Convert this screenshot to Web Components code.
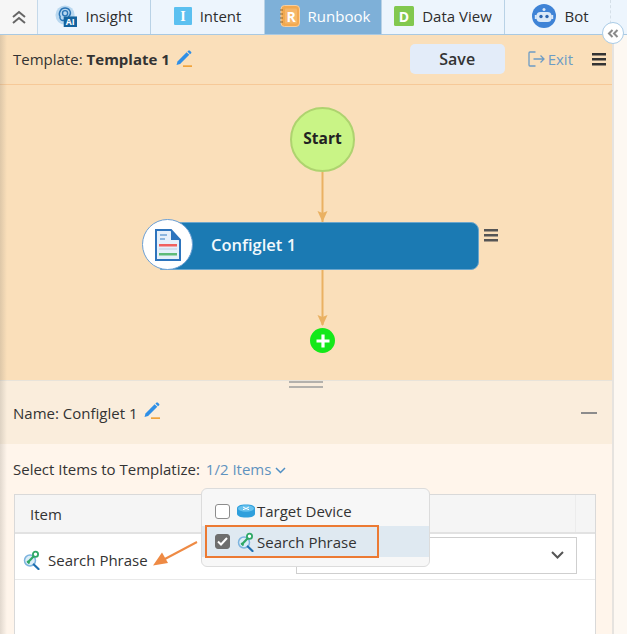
<!DOCTYPE html>
<html>
<head>
<meta charset="utf-8">
<title>Runbook Template</title>
<style>
  html, body { margin: 0; background: #fff; font-family: "Open Sans", "Noto Sans", sans-serif; color: #333; }
</style>
</head>
<body>
<app-shell>
  <tab-bar slot="tabs">
    <nav-tab icon="insight" width="113">Insight</nav-tab>
    <nav-tab icon="intent" width="114">Intent</nav-tab>
    <nav-tab icon="runbook" width="117" nudge="3" active>Runbook</nav-tab>
    <nav-tab icon="data" width="123">Data View</nav-tab>
    <nav-tab icon="bot" width="106" nudge="6" last>Bot</nav-tab>
  </tab-bar>
  <template-header slot="main" name="Template 1"></template-header>
  <flow-canvas slot="main"></flow-canvas>
  <name-bar slot="main" name="Configlet 1"></name-bar>
  <items-section slot="main"></items-section>
</app-shell>

<script>
const pencil = `<svg width="18" height="18" viewBox="0 0 18 18"><path d="M2.500 11.500 11.600 2.200l2.700 2.600-9.200 9.300-3.600 1z" fill="#2f8fe6"/><path d="M12.400 1.500 13.600.6c.4-.3.8-.3 1.100 0l1.500 1.500c.3.3.3.8 0 1.100L15 4.300z" fill="#2f8fe6"/><rect x="8" y="15.300" width="9" height="1.700" fill="#f0a33c"/></svg>`;

const keySearch = `<svg width="18" height="20" viewBox="0 0 18 20"><circle cx="7" cy="10.500" r="5.500" fill="#dcedf8" stroke="#7db4de" stroke-width="1.500"/><path d="m10.800 14.500 4.700 4.500" stroke="#1f6fb0" stroke-width="2.200" stroke-linecap="round"/><path d="M4.500 12.800 11 6" stroke="#2fa866" stroke-width="2.200"/><path d="m6.500 13.500-2.300-2.300" stroke="#2fa866" stroke-width="1.800"/><circle cx="12.500" cy="4.300" r="2.600" fill="#fff" stroke="#2fa866" stroke-width="1.800"/></svg>`;

const tabIcons = {
  insight: `<svg width="22" height="22" viewBox="0 0 24 24"><circle cx="11" cy="11" r="10.500" fill="#b9d8f0"/><path d="M6 6c2-3.500 8-3.500 10 0 1.500 2.500.5 5-1 6.500.5 2-.5 4-2.500 4.500-1.500-1-2.500-1-4 0-2-.5-3.500-2.500-3-4.500C4.500 11 4.500 8.500 6 6z" fill="none" stroke="#2a74b5" stroke-width="1.600"/><circle cx="11" cy="9" r="2.800" fill="none" stroke="#2a74b5" stroke-width="1.500"/><rect x="9.500" y="12.500" width="14.500" height="11.500" fill="#14639f"/><text x="16.700" y="22" font-family="Open Sans" font-size="9.500" font-weight="700" fill="#fff" text-anchor="middle">AI</text></svg>`,
  intent: `<svg width="18" height="18" viewBox="0 0 18 18"><rect width="18" height="18" rx="1" fill="#5bc0f0"/><text x="9" y="14" font-family="Liberation Serif" font-size="14" font-weight="700" fill="#fff" text-anchor="middle">I</text></svg>`,
  runbook: `<svg width="21" height="22" viewBox="0 0 21 22"><rect x="2" y="0.500" width="18.500" height="21" rx="3.500" fill="#f3a94f" stroke="#f8cf9f"/><path d="M1 5h3M1 9h3M1 13h3M1 17h3" stroke="#8a6a3a" stroke-width="1.200"/><rect x="6" y="3.500" width="12" height="15" rx="1" fill="#f6b76a"/><text x="12" y="16.500" font-family="Open Sans" font-size="14" font-weight="700" fill="#fff" text-anchor="middle">R</text></svg>`,
  data: `<svg width="20" height="20" viewBox="0 0 20 20"><rect width="20" height="20" rx="1.500" fill="#82c84f"/><text x="10" y="15.500" font-family="Open Sans" font-size="14" font-weight="700" fill="#fff" text-anchor="middle">D</text></svg>`,
  bot: `<svg width="24" height="24" viewBox="0 0 24 24"><circle cx="12" cy="12" r="12" fill="#3f83d6"/><rect x="4.500" y="8" width="15" height="10" rx="4" fill="#dbe9f8"/><rect x="2.800" y="11" width="2" height="4" fill="#dbe9f8"/><rect x="19.200" y="11" width="2" height="4" fill="#dbe9f8"/><circle cx="12" cy="5.500" r="1.500" fill="#dbe9f8"/><circle cx="9" cy="12.500" r="1.700" fill="#2d66b0"/><circle cx="15" cy="12.500" r="1.700" fill="#2d66b0"/></svg>`
};

class AppShell extends HTMLElement {
  constructor() {
    super();
    this.attachShadow({ mode: 'open' });
  }

  connectedCallback() {
    this.shadowRoot.innerHTML = `
      <style>
        :host { display: block; position: relative; width: 627px; height: 634px; overflow: hidden; }
        .page { display: flex; height: 599px; }
        .main { width: 612px; display: flex; flex-direction: column; border-right: 2px solid #e6e3df; overflow: hidden; }
        .strip { flex: 1; background: #fdf8f2; }
        .shade { position: absolute; left: 0; top: 35px; bottom: 0; width: 7px; background: linear-gradient(90deg, rgba(120,115,105,.22), rgba(120,115,105,0)); pointer-events: none; }
      </style>
      <slot name="tabs"></slot>
      <div class="page">
        <div class="main"><slot name="main"></slot></div>
        <div class="strip"></div>
      </div>
      <div class="shade"></div>
    `;
  }
}

class TabBar extends HTMLElement {
  constructor() {
    super();
    this.attachShadow({ mode: 'open' });
  }

  connectedCallback() {
    this.shadowRoot.innerHTML = `
      <style>
        :host { display: flex; position: relative; height: 35px; box-sizing: border-box; background: #edf5fd; border-bottom: 1px solid #a9c9e2; }
        .up { width: 37px; display: flex; align-items: center; justify-content: center; background: #f6f6f6; border-right: 1px solid #c5d9ea; }
        .collapse { position: absolute; left: 602px; top: 22px; width: 20px; height: 20px; z-index: 3; border-radius: 50%; background: #fff; border: 1px solid #a9cbe6; display: flex; align-items: center; justify-content: center; }
      </style>
      <div class="up">
        <svg width="16" height="14" viewBox="0 0 16 14" fill="none" stroke="#666" stroke-width="2"><path d="m2 7 6-5 6 5M2 13l6-5 6 5"/></svg>
      </div>
      <slot></slot>
      <div class="collapse">
        <svg width="12" height="9" viewBox="0 0 12 9" fill="none" stroke="#8a8a8a" stroke-width="2"><path d="M5.500 1 2 4.500 5.500 8M10.500 1 7 4.500 10.500 8"/></svg>
      </div>
    `;
  }
}

class NavTab extends HTMLElement {
  constructor() {
    super();
    this.attachShadow({ mode: 'open' });
  }

  connectedCallback() {
    const active = this.hasAttribute('active');
    const last = this.hasAttribute('last');
    const nudge = this.getAttribute('nudge') || 0;
    this.shadowRoot.innerHTML = `
      <style>
        :host { display: flex; align-items: center; justify-content: center; gap: 8px; box-sizing: border-box; padding: 0 0 2px ${nudge}px;
          width: ${this.getAttribute('width')}px; font-size: 15px;
          color: ${active ? '#fff' : '#2d2d2d'}; background: ${active ? '#7eb0d8' : 'transparent'};
          border-right: ${last ? '1px dashed #d5dfe8' : '1px solid #b9d2e6'}; }
        .ico { display: flex; }
      </style>
      <span class="ico">${tabIcons[this.getAttribute('icon')]}</span>
      <slot></slot>
    `;
  }
}

class TemplateHeader extends HTMLElement {
  constructor() {
    super();
    this.attachShadow({ mode: 'open' });
  }

  connectedCallback() {
    this.shadowRoot.innerHTML = `
      <style>
        :host { display: flex; align-items: center; flex: none; height: 50px; box-sizing: border-box; padding: 0 6px 1px 13px;
          background: #fadfba; border-bottom: 1px solid #f6c998; font-size: 15px; color: #333; }
        b { margin-left: 4px; font-weight: 700; }
        .edit { display: flex; margin-left: 5px; }
        .save { margin-left: auto; width: 95px; height: 30px; border-radius: 5px; background: #e3ecf9; font-size: 16px; font-weight: 600; color: #333;
          display: flex; align-items: center; justify-content: center; }
        .exit { display: flex; align-items: center; gap: 3px; margin-left: 23px; color: #6d9cc5; font-size: 15px; }
        .menu { display: flex; margin-left: 19px; }
      </style>
      <span>Template:</span><b>${this.getAttribute('name')}</b>
      <span class="edit">${pencil}</span>
      <div class="save">Save</div>
      <div class="exit">
        <svg width="17" height="16" viewBox="0 0 17 16" fill="none" stroke="#6d9cc5" stroke-width="1.300"><path d="M7.500 1H2a1 1 0 0 0-1 1v12a1 1 0 0 0 1 1h5.500M5.500 8H16M12.500 4.500 16 8l-3.500 3.500"/></svg>
        <span>Exit</span>
      </div>
      <div class="menu">
        <svg width="14" height="13" viewBox="0 0 14 13" fill="#333"><rect width="14" height="2.500"/><rect y="5" width="14" height="2.500"/><rect y="10" width="14" height="2.500"/></svg>
      </div>
    `;
  }
}

class FlowCanvas extends HTMLElement {
  constructor() {
    super();
    this.attachShadow({ mode: 'open' });
  }

  connectedCallback() {
    this.shadowRoot.innerHTML = `
      <style>
        :host { display: block; position: relative; flex: none; height: 296px; background: #fadfba; }
        .start { position: absolute; left: 290px; top: 22px; width: 65px; height: 65px; box-sizing: border-box; border-radius: 50%; padding-bottom: 4px;
          background: #c9f486; border: 2px solid #aed36f; display: flex; align-items: center; justify-content: center;
          font-size: 15.500px; font-weight: 700; color: #222; }
        .wires { position: absolute; left: 0; top: 0; }
        .node { position: absolute; left: 160px; top: 137px; width: 319px; height: 48px; box-sizing: border-box; border-radius: 0 8px 8px 0;
          background: #1b7ab3; border: 1px solid #6ca6cc; color: #f2f8fc; font-size: 16.500px; font-weight: 600;
          display: flex; align-items: center; padding: 0 0 3px 50px; }
        .badge { position: absolute; left: 142px; top: 134px; width: 51px; height: 51px; box-sizing: border-box; border-radius: 50%;
          background: #fff; border: 1.500px solid #6b9fd4; display: flex; align-items: center; justify-content: center; }
        .node-menu { position: absolute; left: 484px; top: 144px; display: flex; }
        .add { position: absolute; left: 310px; top: 243px; width: 25px; height: 25px; border-radius: 50%; background: #14e81a; display: flex; align-items: center; justify-content: center; }
        .handle { position: absolute; left: 289px; bottom: -7px; width: 34px; height: 7px; border-top: 2px solid #b4b1ac; border-bottom: 2px solid #b4b1ac; box-sizing: border-box; z-index: 2; }
        .edge { position: absolute; left: 0; right: 0; bottom: 0; height: 1px; background: #e8e3da; }
      </style>
      <svg class="wires" width="612" height="296" fill="#eab162" stroke="none">
        <rect x="321.500" y="87" width="2" height="50"/>
        <path d="m317.500 126 5 11 5-11-5 2z"/>
        <rect x="321.500" y="184" width="2" height="56"/>
        <path d="m317.500 230 5 11 5-11-5 2z"/>
      </svg>
      <div class="start">Start</div>
      <div class="node">Configlet 1</div>
      <div class="badge">
        <svg width="26" height="32" viewBox="0 0 26 32">
          <path d="M1 1h15l9 10v20H1z" fill="#e6f0fa" stroke="#2d74bd" stroke-width="2"/>
          <path d="M16 1v10h9z" fill="#2d74bd"/>
          <path d="M5 6h7M5 10h5" stroke="#6fa3d6" stroke-width="1.600"/>
          <rect x="4" y="15" width="18" height="2.500" fill="#f0605f"/>
          <rect x="4" y="19.500" width="18" height="1" fill="#bcd0e4"/>
          <rect x="4" y="24" width="18" height="2.500" fill="#5fbb78"/>
        </svg>
      </div>
      <div class="node-menu">
        <svg width="14" height="13" viewBox="0 0 14 13" fill="#555"><rect width="14" height="2.500"/><rect y="5" width="14" height="2.500"/><rect y="10" width="14" height="2.500"/></svg>
      </div>
      <div class="add">
        <svg width="16" height="16" viewBox="0 0 16 16"><path d="M8 1.500v13M1.500 8h13" stroke="#fff" stroke-width="3.200"/></svg>
      </div>
      <div class="edge"></div>
      <div class="handle"></div>
    `;
  }
}

class NameBar extends HTMLElement {
  constructor() {
    super();
    this.attachShadow({ mode: 'open' });
  }

  connectedCallback() {
    this.shadowRoot.innerHTML = `
      <style>
        :host { display: flex; align-items: center; flex: none; height: 63px; box-sizing: border-box; padding: 0 15px 0 13px; background: #faeddc; font-size: 15px; color: #333; }
        .edit { display: flex; margin-left: 6px; margin-top: -3px; }
        .minus { margin-left: auto; width: 16px; height: 2px; background: #8c8c8c; }
      </style>
      <span>Name: ${this.getAttribute('name')}</span>
      <span class="edit">${pencil}</span>
      <div class="minus"></div>
    `;
  }
}

class ItemsSection extends HTMLElement {
  constructor() {
    super();
    this.attachShadow({ mode: 'open' });
  }

  connectedCallback() {
    this.shadowRoot.innerHTML = `
      <style>
        :host { display: block; position: relative; flex: 1; min-height: 0; background: #fff5eb; padding: 14px 16px 0 14px; font-size: 15px; color: #333; }
        .pick { display: flex; align-items: center; height: 22px; margin-left: -1px; }
        .count { margin-left: 6px; color: #5f93bf; }
        .pick svg { margin-left: 4px; margin-top: 2px; }
        items-table { margin-top: 14px; }
      </style>
      <div class="pick">
        <span>Select Items to Templatize:</span>
        <span class="count">1/2 Items</span>
        <svg width="11" height="7" viewBox="0 0 11 7" fill="none" stroke="#4f8fc4" stroke-width="1.500"><path d="m1 1 4.500 4.500L10 1"/></svg>
      </div>
      <items-table></items-table>
      <item-dropdown></item-dropdown>
      <svg style="position:absolute;left:150px;top:95px" width="50" height="30" viewBox="0 0 50 30">
        <path d="M47 3 13 21" stroke="#ee8a44" stroke-width="2" fill="none"/>
        <path d="m3 26.500 9-13 6 10.500z" fill="#ee8a44"/>
      </svg>
    `;
  }
}

class ItemsTable extends HTMLElement {
  constructor() {
    super();
    this.attachShadow({ mode: 'open' });
  }

  connectedCallback() {
    this.shadowRoot.innerHTML = `
      <style>
        :host { display: block; height: 160px; box-sizing: border-box; background: #fff; border: 1px solid #d9d9d9; border-bottom: 0; }
        .head { display: flex; height: 39px; box-sizing: border-box; background: #f5f5f5; border-bottom: 2px solid #e2e2e2; align-items: center; padding-left: 15px; }
        .head span { flex: 1; }
        .head i { width: 19px; height: 100%; border-left: 1px solid #ececec; }
        .row { display: flex; align-items: center; height: 46px; box-sizing: border-box; border-bottom: 1px solid #e9e9e9; padding: 0 18px 3px 8px; }
        .row .ico { display: flex; margin: 10px 7px 0 0; }
        .row .name { margin-top: 10px; }
        .sel { margin-left: auto; width: 281px; height: 37px; box-sizing: border-box; border: 1px solid #cfcfcf; background: #fff; display: flex; align-items: center; justify-content: flex-end; padding-right: 12px; }
      </style>
      <div class="head"><span>Item</span><i></i></div>
      <div class="row">
        <span class="ico">${keySearch}</span>
        <span class="name">Search Phrase</span>
        <div class="sel">
          <svg width="13" height="8" viewBox="0 0 13 8" fill="none" stroke="#555" stroke-width="2"><path d="m1 1 5.500 5.500L12 1"/></svg>
        </div>
      </div>
    `;
  }
}

class ItemDropdown extends HTMLElement {
  constructor() {
    super();
    this.attachShadow({ mode: 'open' });
  }

  connectedCallback() {
    this.shadowRoot.innerHTML = `
      <style>
        :host { display: block; position: absolute; left: 201px; top: 44px; width: 229px; height: 79px; box-sizing: border-box; z-index: 2;
          background: #f7f7f7; border: 1.500px solid #dcdcdc; border-radius: 6px; padding-top: 7px; }
        .opt { display: flex; align-items: center; height: 30px; padding-left: 13px; position: relative; }
        .opt.on { height: 31px; background: #dfe9f1; margin-top: 0; }
        .box { width: 15px; height: 15px; box-sizing: border-box; border-radius: 3px; background: #fff; border: 1.500px solid #8c8c8c; margin-right: 7px; display: flex; align-items: center; justify-content: center; }
        .on .box { background: #6e6e6e; border-color: #6e6e6e; }
        .ico { display: flex; margin-right: 2px; }
        .mark { position: absolute; left: 3px; top: -1px; width: 174px; height: 33px; box-sizing: border-box; border: 2px solid #ec7a33; pointer-events: none; }
      </style>
      <div class="opt">
        <span class="box"></span>
        <span class="ico">
          <svg width="18" height="14" viewBox="0 0 18 14"><path d="M0 4.500C0 2 3 .5 9 .5s9 1.500 9 4v5c0 2.500-3 4-9 4s-9-1.500-9-4z" fill="#2f9fdc"/><ellipse cx="9" cy="4.500" rx="8" ry="3.300" fill="#66c1ee"/><path d="m6 3 3 1.500-3 1.200M12 3 9 4.500l3 1.200" stroke="#fff" fill="none"/></svg>
        </span>
        <span>Target Device</span>
      </div>
      <div class="opt on">
        <span class="box">
          <svg width="11" height="9" viewBox="0 0 11 9" fill="none" stroke="#fff" stroke-width="2"><path d="m1 4.500 3 3L10 1"/></svg>
        </span>
        <span class="ico">${keySearch}</span>
        <span>Search Phrase</span>
        <div class="mark"></div>
      </div>
    `;
  }
}

customElements.define('app-shell', AppShell);
customElements.define('tab-bar', TabBar);
customElements.define('nav-tab', NavTab);
customElements.define('template-header', TemplateHeader);
customElements.define('flow-canvas', FlowCanvas);
customElements.define('name-bar', NameBar);
customElements.define('items-section', ItemsSection);
customElements.define('items-table', ItemsTable);
customElements.define('item-dropdown', ItemDropdown);
</script>
</body>
</html>
